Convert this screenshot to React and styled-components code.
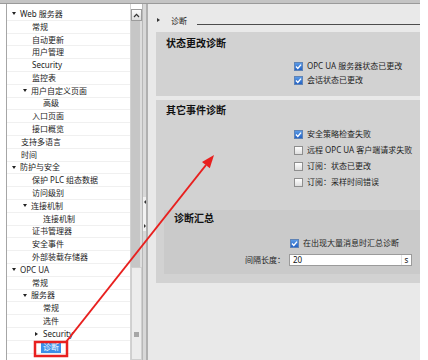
import React from 'react'
import styled, { createGlobalStyle } from 'styled-components'

const GlobalStyle = createGlobalStyle`
  html, body {
    margin: 0;
    padding: 0;
    background: #ffffff;
  }
  body {
    font-family: "Noto Sans", "Noto Sans CJK SC", sans-serif;
  }
`

const Frame = styled.div`
  position: relative;
  width: 428px;
  height: 360px;
  overflow: hidden;
  display: flex;
  flex-direction: column;
  background: #ffffff;
  font-family: "Noto Sans", "Noto Sans CJK SC", sans-serif;
`

const TopStrip = styled.div`
  flex: none;
  width: 420px;
  height: 3px;
  background: #c4c4c4;
  border-bottom: 1px solid #9a9a9a;
`

const Body = styled.div`
  flex: 1;
  min-height: 0;
  display: flex;
`

const Gutter = styled.div`
  flex: none;
  width: ${props => props.$w}px;
  background: #ffffff;
`

/* ---------- tree ---------- */

const TreePanel = styled.div`
  flex: none;
  width: 124px;
  box-sizing: border-box;
  border-left: 1px solid #a6a6a6;
  background: #ffffff;
  padding-top: 4px;
  overflow: hidden;
`

const Row = styled.div`
  height: 12.8px;
  box-sizing: border-box;
  display: flex;
  align-items: center;
  padding-left: ${props => 14 + (props.$level - 1) * 11 - (props.$arrow ? 9 : 0)}px;
  border-bottom: 1px solid #f0f0f0;
  font-size: 8px;
  line-height: 10px;
  color: #1c1c1c;
  white-space: nowrap;
`

const Arrow = styled.span`
  flex: none;
  width: 0;
  height: 0;
  margin-right: ${props => (props.$open ? 4 : 5)}px;
  border-style: solid;
  border-color: transparent;
  ${props =>
    props.$open
      ? `border-width: 3px 2.5px 0 2.5px; border-top-color: #222;`
      : `border-width: 2.5px 0 2.5px 3.5px; border-left-color: #222; margin-left: 1px;`}
`

const Label = styled.span`
  padding: 1px 2px;
  margin-left: -2px;
  background: ${props => (props.$selected ? '#3c8fe8' : 'transparent')};
  color: ${props => (props.$selected ? '#ffffff' : 'inherit')};
`

/* ---------- scrollbar + splitter ---------- */

const ScrollBar = styled.div`
  flex: none;
  width: 12px;
  box-sizing: border-box;
  display: flex;
  flex-direction: column;
  background: #ffffff;
  border-left: 1px solid #d2d2d2;
  padding-top: 5px;
`

const ScrollButton = styled.div`
  flex: none;
  height: 12px;
  box-sizing: border-box;
  border: 1px solid #9c9c9c;
  background: linear-gradient(#fbfbfb, #dcdcdc);
  display: flex;
  align-items: center;
  justify-content: center;
`

const ScrollThumb = styled.div`
  flex: none;
  height: 246px;
  background: #c6c6c6;
  border-right: 2px solid #dddddd;
`

const ScrollTrack = styled.div`
  flex: 1;
  box-sizing: border-box;
  background: #ececec;
  border: 1px solid #cfcfcf;
  padding-top: 64px;
  display: flex;
  justify-content: center;
`

const TrackMark = styled.div`
  width: 5px;
  height: 5px;
  background: #a6a6a6;
`

const Splitter = styled.div`
  flex: none;
  width: 6px;
  box-sizing: border-box;
  background: #d8d8d8;
  border-left: 1px solid #b8b8b8;
  border-right: 2px solid #b0b0b0;
  padding-top: 193px;
`

const SplitGrip = styled.div`
  height: 34px;
  background: #f2f2f2;
  display: flex;
  flex-direction: column;
  justify-content: space-between;
  align-items: center;
  padding: 3px 0;
  box-sizing: border-box;
`

const GripArrow = styled.span`
  width: 0;
  height: 0;
  border-style: solid;
  border-color: transparent;
  ${props =>
    props.$dir === 'left'
      ? `border-width: 2px 2px 2px 0; border-right-color: #333;`
      : `border-width: 2px 0 2px 2px; border-left-color: #333;`}
`

/* ---------- content ---------- */

const Content = styled.div`
  flex: none;
  width: 272px;
  box-sizing: border-box;
  background: #e9e9e9;
  padding-left: 8px;
  display: flex;
  flex-direction: column;
`

const Header = styled.div`
  flex: none;
  height: 22px;
  display: flex;
  align-items: flex-end;
  font-size: 8px;
  line-height: 10px;
  color: #222;
`

const HeaderChevron = styled.span`
  width: 0;
  height: 0;
  margin: 0 11px 4px 1px;
  border-style: solid;
  border-color: transparent;
  border-width: 2px 0 2px 3px;
  border-left-color: #333;
`

const HeaderRule = styled.span`
  flex: 1;
  height: 0;
  margin-left: 10px;
  margin-bottom: 1px;
  border-bottom: 1px solid #4c4c4c;
`

const Section = styled.section`
  margin-top: ${props => props.$gap}px;
  background: #d2d2d2;
  padding: ${props => props.$top}px 0 9px;
`

const SectionTitle = styled.div`
  padding-left: 10px;
  font-size: 10px;
  font-weight: 700;
  line-height: 12px;
  color: #111;
`

const Options = styled.div`
  margin-top: 10px;
  padding-left: 138px;
  display: flex;
  flex-direction: column;
`

const Option = styled.label`
  height: ${props => props.$h || 14}px;
  display: flex;
  align-items: center;
  gap: 4px;
  font-size: 8px;
  line-height: 10px;
  color: #1e1e1e;
  white-space: nowrap;
  margin-left: ${props => props.$indent || 0}px;
`

const Box = styled.span`
  flex: none;
  width: 9px;
  height: 9px;
  box-sizing: border-box;
  display: flex;
  align-items: center;
  justify-content: center;
  border: 1px solid ${props => (props.$checked ? '#5f83b5' : '#8e8e8e')};
  background: ${props =>
    props.$checked
      ? 'linear-gradient(#5a9ae6, #2462c4)'
      : 'linear-gradient(#ffffff, #dedede)'};
`

const SubBox = styled.div`
  margin: 20px 0 0 8px;
  background: #cacaca;
  padding: 2px 0 8px;
`

const FormGrid = styled.div`
  margin-top: 12px;
  display: grid;
  grid-template-columns: 121px 123px;
  column-gap: 4px;
  row-gap: 4px;
  align-items: center;
`

const FieldLabel = styled.span`
  text-align: right;
  font-size: 8px;
  line-height: 10px;
  color: #1e1e1e;
`

const Field = styled.div`
  height: 12px;
  box-sizing: border-box;
  display: flex;
  align-items: center;
  background: #ffffff;
  border: 1px solid #9b9b9b;
  font-size: 8px;
  line-height: 10px;
  color: #111;
`

const FieldValue = styled.span`
  flex: 1;
  padding-left: 3px;
`

const FieldUnit = styled.span`
  width: 9px;
  height: 100%;
  display: flex;
  align-items: center;
  justify-content: center;
  border-left: 1px solid #e2e2e2;
`

const Overlay = styled.svg`
  position: absolute;
  left: 0;
  top: 0;
  pointer-events: none;
`

const tree = [
  [1, 'Web 服务器', 'open'],
  [2, '常规'],
  [2, '自动更新'],
  [2, '用户管理'],
  [2, 'Security'],
  [2, '监控表'],
  [2, '用户自定义页面', 'open'],
  [3, '高级'],
  [2, '入口页面'],
  [2, '接口概览'],
  [1, '支持多语言'],
  [1, '时间'],
  [1, '防护与安全', 'open'],
  [2, '保护 PLC 组态数据'],
  [2, '访问级别'],
  [2, '连接机制', 'open'],
  [3, '连接机制'],
  [2, '证书管理器'],
  [2, '安全事件'],
  [2, '外部装载存储器'],
  [1, 'OPC UA', 'open'],
  [2, '常规'],
  [2, '服务器', 'open'],
  [3, '常规'],
  [3, '选件'],
  [3, 'Security', 'closed'],
  [3, '诊断', null, true],
]

const CheckBox = ({ checked }) => (
  <Box $checked={checked}>
    {checked && (
      <svg width="7" height="7" viewBox="0 0 7 7">
        <path d="M1 3.6 L2.8 5.4 L6 1.6" fill="none" stroke="#ffffff" strokeWidth="1.4" />
      </svg>
    )}
  </Box>
)

const Check = ({ checked, h, indent, children }) => (
  <Option $h={h} $indent={indent}>
    <CheckBox checked={checked} />
    {children}
  </Option>
)

export default function App() {
  return (
    <Frame>
      <GlobalStyle />
      <TopStrip />
      <Body>
        <Gutter $w={6} />
        <TreePanel>
          {tree.map(([level, text, arrow, selected], i) => (
            <Row key={i} $level={level} $arrow={!!arrow}>
              {arrow && <Arrow $open={arrow === 'open'} />}
              <Label $selected={selected}>{text}</Label>
            </Row>
          ))}
        </TreePanel>
        <ScrollBar>
          <ScrollButton>
            <svg width="7" height="5" viewBox="0 0 7 5">
              <path d="M1 4 L3.5 1.3 L6 4" fill="none" stroke="#333" strokeWidth="1.2" />
            </svg>
          </ScrollButton>
          <ScrollThumb />
          <ScrollTrack>
            <TrackMark />
          </ScrollTrack>
        </ScrollBar>
        <Splitter>
          <SplitGrip>
            <GripArrow $dir="left" />
            <GripArrow $dir="right" />
          </SplitGrip>
        </Splitter>
        <Content>
          <Header>
            <HeaderChevron />
            <span>诊断</span>
            <HeaderRule />
          </Header>

          <Section $gap={6} $top={5}>
            <SectionTitle>状态更改诊断</SectionTitle>
            <Options>
              <Check checked>OPC UA 服务器状态已更改</Check>
              <Check checked>会话状态已更改</Check>
            </Options>
          </Section>

          <Section $gap={4} $top={4}>
            <SectionTitle>其它事件诊断</SectionTitle>
            <Options>
              <Check checked h={16}>安全策略检查失败</Check>
              <Check h={16}>远程 OPC UA 客户端请求失败</Check>
              <Check h={16}>订阅：状态已更改</Check>
              <Check h={16}>订阅：采样时间错误</Check>
            </Options>
            <SubBox>
              <SectionTitle>诊断汇总</SectionTitle>
              <FormGrid>
                <span />
                <Check checked indent={1}>在出现大量消息时汇总诊断</Check>
                <FieldLabel>间隔长度：</FieldLabel>
                <Field>
                  <FieldValue>20</FieldValue>
                  <FieldUnit>s</FieldUnit>
                </Field>
              </FormGrid>
            </SubBox>
          </Section>
        </Content>
        <Gutter $w={8} />
      </Body>

      <Overlay width="428" height="360" viewBox="0 0 428 360">
        <rect x="35" y="342" width="32" height="14" fill="none" stroke="#e8201f" strokeWidth="2.5" />
        <line x1="66" y1="342" x2="206" y2="165" stroke="#e8201f" strokeWidth="2" />
        <polygon points="214,155 209.8,168.3 202,162.1" fill="#e8201f" />
      </Overlay>
    </Frame>
  )
}
